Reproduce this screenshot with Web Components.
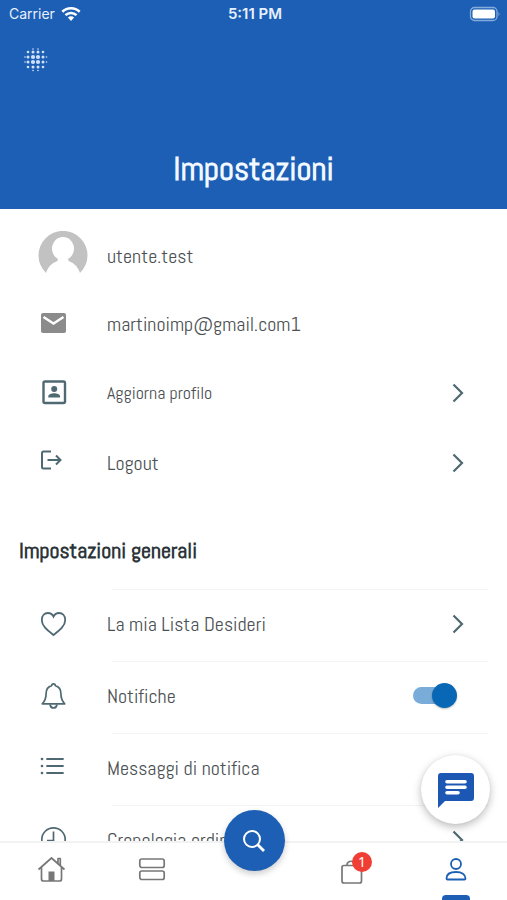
<!DOCTYPE html>
<html lang="it">
<head>
<meta charset="utf-8">
<meta name="viewport" content="width=device-width, initial-scale=1">
<title>Impostazioni</title>
<style>
:root {
  --blue: #1d5fb4;
  --ink: #4c5154;
  --slate: #4f6973;
  --line: #f3f3f3;
  --display: Abel, "Liberation Sans Narrow", "Roboto Condensed", Roboto, sans-serif;
}
body { margin: 0; background: #fff; font-family: var(--display); color: var(--ink); }
</style>
</head>
<body>
<settings-app></settings-app>
<script>
const define = (name, html, setup) => customElements.define(name, class extends HTMLElement {
  constructor() {
    super();
    this.attachShadow({ mode: 'open' }).innerHTML = html;
  }
  connectedCallback() { if (setup) setup(this, this.shadowRoot); }
});

const icons = {
  mail: '<svg width="28" height="28" viewBox="0 0 28 28"><rect x="1" y="3" width="25" height="20" rx="2" fill="#8b8b8b"/><path d="M3.500 7 13.500 13.500 23.500 7" fill="none" stroke="#fff" stroke-width="2.400"/></svg>',
  profile: '<svg width="28" height="28" viewBox="0 0 28 28"><rect x="3.500" y="2.500" width="21.500" height="21.500" rx="1.500" fill="none" stroke="currentColor" stroke-width="2.400"/><circle cx="14.200" cy="10" r="3" fill="currentColor"/><path d="M8.300 18.500v-1c0-2.200 3.200-3.300 5.900-3.300s5.900 1.100 5.900 3.300v1z" fill="currentColor"/></svg>',
  logout: '<svg width="28" height="28" viewBox="0 0 28 28"><path d="M11 2.500H3.500q-1.500 0-1.500 1.500V18q0 1.500 1.500 1.500H11M7.500 11H20.500M16 6.500 20.500 11 16 15.500" fill="none" stroke="currentColor" stroke-width="2"/></svg>',
  heart: '<svg width="28" height="28" viewBox="0 0 28 28"><path d="M13.500 25C8.500 21 1.800 16.500 1.800 9.900 1.800 5.700 4.500 3 7.900 3c2.500 0 4.500 1.300 5.600 3.600C14.600 4.300 16.600 3 19.100 3c3.400 0 6.100 2.700 6.100 6.900C25.200 16.500 18.500 21 13.500 25z" fill="none" stroke="currentColor" stroke-width="1.800"/></svg>',
  bell: '<svg width="28" height="28" viewBox="0 0 28 28"><path d="M11.700 3.600a1.800 1.800 0 0 1 3.600 0c3.900 1 5.600 4.200 5.600 8 0 5.300 1.100 7.500 3.800 10.200H2.300c2.700-2.700 3.800-4.900 3.800-10.200 0-3.800 1.700-7 5.600-8z" fill="none" stroke="currentColor" stroke-width="1.700" stroke-linejoin="round"/><path d="M10 22.500c.4 2.300 1.700 3.500 3.500 3.500s3.100-1.200 3.500-3.500" fill="none" stroke="currentColor" stroke-width="1.700"/></svg>',
  list: '<svg width="28" height="28" viewBox="0 0 28 28"><path d="M7 5H23M7 12H23M7 19H23" stroke="currentColor" stroke-width="1.800" stroke-linecap="round"/><g fill="currentColor"><circle cx="2" cy="5" r="1.300"/><circle cx="2" cy="12" r="1.300"/><circle cx="2" cy="19" r="1.300"/></g></svg>',
  clock: '<svg width="28" height="28" viewBox="0 0 28 28"><circle cx="13.500" cy="13.500" r="11.700" fill="none" stroke="currentColor" stroke-width="1.700"/><path d="M13.500 5.500v9H7" fill="none" stroke="currentColor" stroke-width="1.700"/></svg>',
  home: '<svg width="30" height="30" viewBox="0 0 30 30"><path d="M2.500 14.500 15.500 3 28.500 14.500M5.500 12.500V24q0 2 2 2H23.500q2 0 2-2V12.500M22 8.500V3.500h2.300v7" fill="none" stroke="currentColor" stroke-width="1.700" stroke-linejoin="round"/><path d="M12.500 16.500h6V26h-6z" fill="currentColor"/></svg>',
  rows: '<svg width="30" height="30" viewBox="0 0 30 30"><g fill="none" stroke="currentColor" stroke-width="1.700"><rect x="2.800" y="4" width="24.400" height="8.500" rx="2"/><rect x="2.800" y="16" width="24.400" height="8.500" rx="2"/></g></svg>',
  bag: '<svg width="30" height="30" viewBox="0 0 30 30"><path d="M5 10.500H19.500q2 0 2 2V26q0 2-2 2H4q-2 0-2-2V12.500q0-2 2-2zM7 10C7 5 16.500 5 16.500 10" fill="none" stroke="currentColor" stroke-width="1.700"/></svg>',
  person: '<svg width="30" height="30" viewBox="0 0 30 30"><g fill="none" stroke="currentColor" stroke-width="1.800"><circle cx="15" cy="9" r="5"/><path d="M5.500 23.500c0-4 3.500-6.500 9.500-6.500s9.500 2.500 9.500 6.500q0 1-1 1h-17q-1 0-1-1z" stroke-linejoin="round"/></g></svg>',
  chevron: '<svg width="12" height="20" viewBox="0 0 12 20"><path d="M1.500 1.500 10 10 1.500 18.500" fill="none" stroke="currentColor" stroke-width="2.200"/></svg>'
};

define('status-bar', `
<style>
:host { display: grid; grid-template-columns: 1fr auto 1fr; align-items: center; height: 28px; padding: 0 6px 0 9px;
  font: 14px/20px Inter, "Liberation Sans", sans-serif; color: #e6f0ff; }
.left { display: flex; align-items: center; gap: 6px; }
b { font-weight: 600; font-size: 15px; }
.battery { justify-self: end; }
svg { display: block; }
</style>
<span class="left"><span>Carrier</span>
<svg width="20" height="16" viewBox="0 0 20 16" fill="none" stroke="#fff" stroke-width="2.600"><path d="M1.300 5.800a12.500 12.500 0 0 1 17.400 0M4.500 9.200a7.800 7.800 0 0 1 11 0"/><path d="M6.900 11.500a4.400 4.400 0 0 1 6.200 0L10 14.900z" fill="#fff" stroke="none"/></svg></span>
<b>5:11 PM</b>
<svg class="battery" width="32" height="16" viewBox="0 0 32 16"><rect x="1.500" y="1.500" width="26.500" height="13" rx="4" fill="none" stroke="#83abdc" stroke-width="1.300"/><rect x="3.500" y="3.500" width="22.500" height="9" rx="2" fill="#fff"/><path d="M29.500 6q2 2 0 4z" fill="#83abdc"/></svg>`);

define('dot-logo', `
<style>:host { display: block; width: 24px; height: 24px; } svg { display: block; }</style>
<svg width="24" height="24" viewBox="0 0 24 24" fill="#d0e2fa"></svg>`, (host, root) => {
  const radius = [[0, 0, .8], [0, 1.300, 1.500], [.8, 1.500, 2.100]];
  const at = [1, 4, 9, 14, 19, 22.500];
  let dots = '';
  for (let r = 0; r < 6; r++) for (let c = 0; c < 6; c++) {
    const size = radius[Math.min(r, 5 - r)][Math.min(c, 5 - c)];
    if (size) dots += `<circle cx="${at[c]}" cy="${at[r]}" r="${size}"/>`;
  }
  root.querySelector('svg').innerHTML = dots;
});

define('page-header', `
<style>
:host { display: block; flex: none; background: var(--blue); color: #fff; padding-bottom: 18px; }
dot-logo { margin: 20px 0 0 24px; }
h1 { margin: 75px 0 0; text-align: center; font-weight: 700; font-size: 33px; line-height: 44px; color: #f2f8ff; }
</style>
<status-bar></status-bar><dot-logo></dot-logo><h1><slot></slot></h1>`);

define('user-avatar', `
<style>:host { display: block; } svg { display: block; }</style>
<svg width="50" height="50" viewBox="0 0 50 50" role="img" aria-label="Avatar"><path d="M8 42A24.500 24.500 0 1 1 42 42C40 36 36 32 31.500 30.500Q29.500 29.500 30.500 27.500A11 11.500 0 1 0 19.500 27.500Q20.500 29.500 18.500 30.500C14 32 10 36 8 42z" fill="#c2c2c2"/></svg>`);

define('setting-row', `
<style>
:host { display: block; }
.row { display: grid; grid-template-columns: 107px 1fr auto; align-items: center; min-height: var(--row, 70px);
  padding-right: 43px; color: inherit; text-decoration: none; font-size: 20px; line-height: 28px; }
:host([small]) .row { font-size: 18px; }
.icon { justify-self: center; color: var(--slate); display: block; }
.end { color: var(--slate); display: block; }
svg { display: block; }
user-avatar { margin-left: 19px; }
:host([lined]) { --row: 67px; padding-bottom: 4px; }
:host([lined])::before { content: ""; display: block; height: 1px; background: var(--line); margin: 0 19px 0 112px; }
</style>
<div class="row"><span class="icon"></span><span><slot></slot></span><span class="end"></span></div>`, (host, root) => {
  const icon = host.getAttribute('icon');
  let row = root.querySelector('.row');
  if (host.getAttribute('kind') === 'link') {
    const a = document.createElement('a');
    a.className = 'row'; a.href = '#'; a.append(...row.childNodes);
    row.replaceWith(a); row = a;
    row.querySelector('.end').innerHTML = icons.chevron;
  }
  row.querySelector('.icon').innerHTML = icon === 'avatar' ? '<user-avatar></user-avatar>' : icons[icon];
});

define('setting-switch', `
<style>
:host { display: block; padding-bottom: 4px; }
:host::before { content: ""; display: block; height: 1px; background: var(--line); margin: 0 19px 0 112px; }
label { display: grid; grid-template-columns: 107px 1fr auto; align-items: center; min-height: 67px;
  padding-right: 50px; font-size: 20px; line-height: 28px; }
.icon { justify-self: center; color: var(--slate); }
svg { display: block; }
input { appearance: none; margin: 0; width: 44px; height: 26px; display: flex; align-items: center; }
input::before { content: ""; flex: 1; height: 17px; border-radius: 9px 0 0 9px; background: #79acd8; margin-right: -12px; }
input::after { content: ""; width: 25px; height: 25px; border-radius: 50%; background: #0868b5; box-shadow: 0 1px 2px #0004; }
</style>
<label for="s"><span class="icon">${icons.bell}</span><span><slot></slot></span><input id="s" type="checkbox" role="switch" checked></label>`);

define('tab-bar', `
<style>
:host { display: block; flex: none; position: relative; background: #fff; border-top: 2px solid #f2f2f2; }
nav { display: grid; grid-template-columns: repeat(5, 1fr); height: 57px; }
a { display: flex; justify-content: center; padding-top: 12px; color: #777; position: relative; text-decoration: none; }
svg { display: block; }
a.on { color: var(--blue); }
a.on::after { content: ""; position: absolute; bottom: 0; width: 28px; height: 5px; border-radius: 4px 4px 0 0; background: var(--blue); }
.badge { position: absolute; top: 9px; left: 50%; margin-left: -3px; width: 20px; height: 20px; border-radius: 50%;
  background: #f03e35; color: #fff; text-align: center; font: 14px/20px "Noto Sans", sans-serif; }
button { position: absolute; left: 50%; top: -33px; margin-left: -30px; width: 61px; height: 61px; border: 0; border-radius: 50%; padding: 0;
  background: var(--blue); display: grid; place-items: center; box-shadow: 0 3px 6px #0003; }
</style>
<nav>
<a href="#" aria-label="Home">${icons.home}</a>
<a href="#" aria-label="Categorie">${icons.rows}</a>
<span></span>
<a href="#" aria-label="Carrello">${icons.bag}<span class="badge">1</span></a>
<a href="#" class="on" aria-label="Profilo">${icons.person}</a>
</nav>
<button aria-label="Cerca"><svg width="26" height="26" viewBox="0 0 26 26" fill="none" stroke="#fff" stroke-width="2"><circle cx="11" cy="11" r="8"/><path d="M16.500 16.500 23 23" stroke-width="2.800"/></svg></button>`);

define('chat-button', `
<style>
:host { position: absolute; right: 17px; bottom: 76px; }
button { width: 69px; height: 69px; border: 0; border-radius: 50%; padding: 0; background: #fff; display: grid; place-items: center;
  box-shadow: 0 3px 8px #0004, 0 0 2px #0001; }
svg { display: block; }
</style>
<button aria-label="Chat"><svg width="36" height="36" viewBox="0 0 36 36"><path d="M0 36V4Q0 1 3 1H33Q36 1 36 4V26Q36 29 33 29H7z" fill="#1c57b3"/><path d="M9 9.800H27M9 15.300H27M9 20.800H20" stroke="#fff" stroke-width="3.600" stroke-linecap="round"/></svg></button>`);

define('settings-app', `
<style>
:host { display: flex; flex-direction: column; height: 100vh; position: relative; overflow: hidden; }
main { flex: 1; min-height: 0; overflow: hidden; padding-top: 13px; }
h2 { margin: 0; padding: 36px 19px 23px; font-size: 22px; line-height: 32px; font-weight: 700; color: #2b3438; }
.tall { --row: 68px; }
</style>
<page-header>Impostazioni</page-header>
<main>
<setting-row class="tall" icon="avatar">utente.test</setting-row>
<setting-row class="tall" icon="mail">martinoimp@gmail.com1</setting-row>
<setting-row small icon="profile" kind="link">Aggiorna profilo</setting-row>
<setting-row icon="logout" kind="link">Logout</setting-row>
<h2>Impostazioni generali</h2>
<setting-row lined icon="heart" kind="link">La mia Lista Desideri</setting-row>
<setting-switch>Notifiche</setting-switch>
<setting-row lined icon="list">Messaggi di notifica</setting-row>
<setting-row lined icon="clock" kind="link">Cronologia ordini</setting-row>
</main>
<tab-bar></tab-bar>
<chat-button></chat-button>`);
</script>
</body>
</html>
